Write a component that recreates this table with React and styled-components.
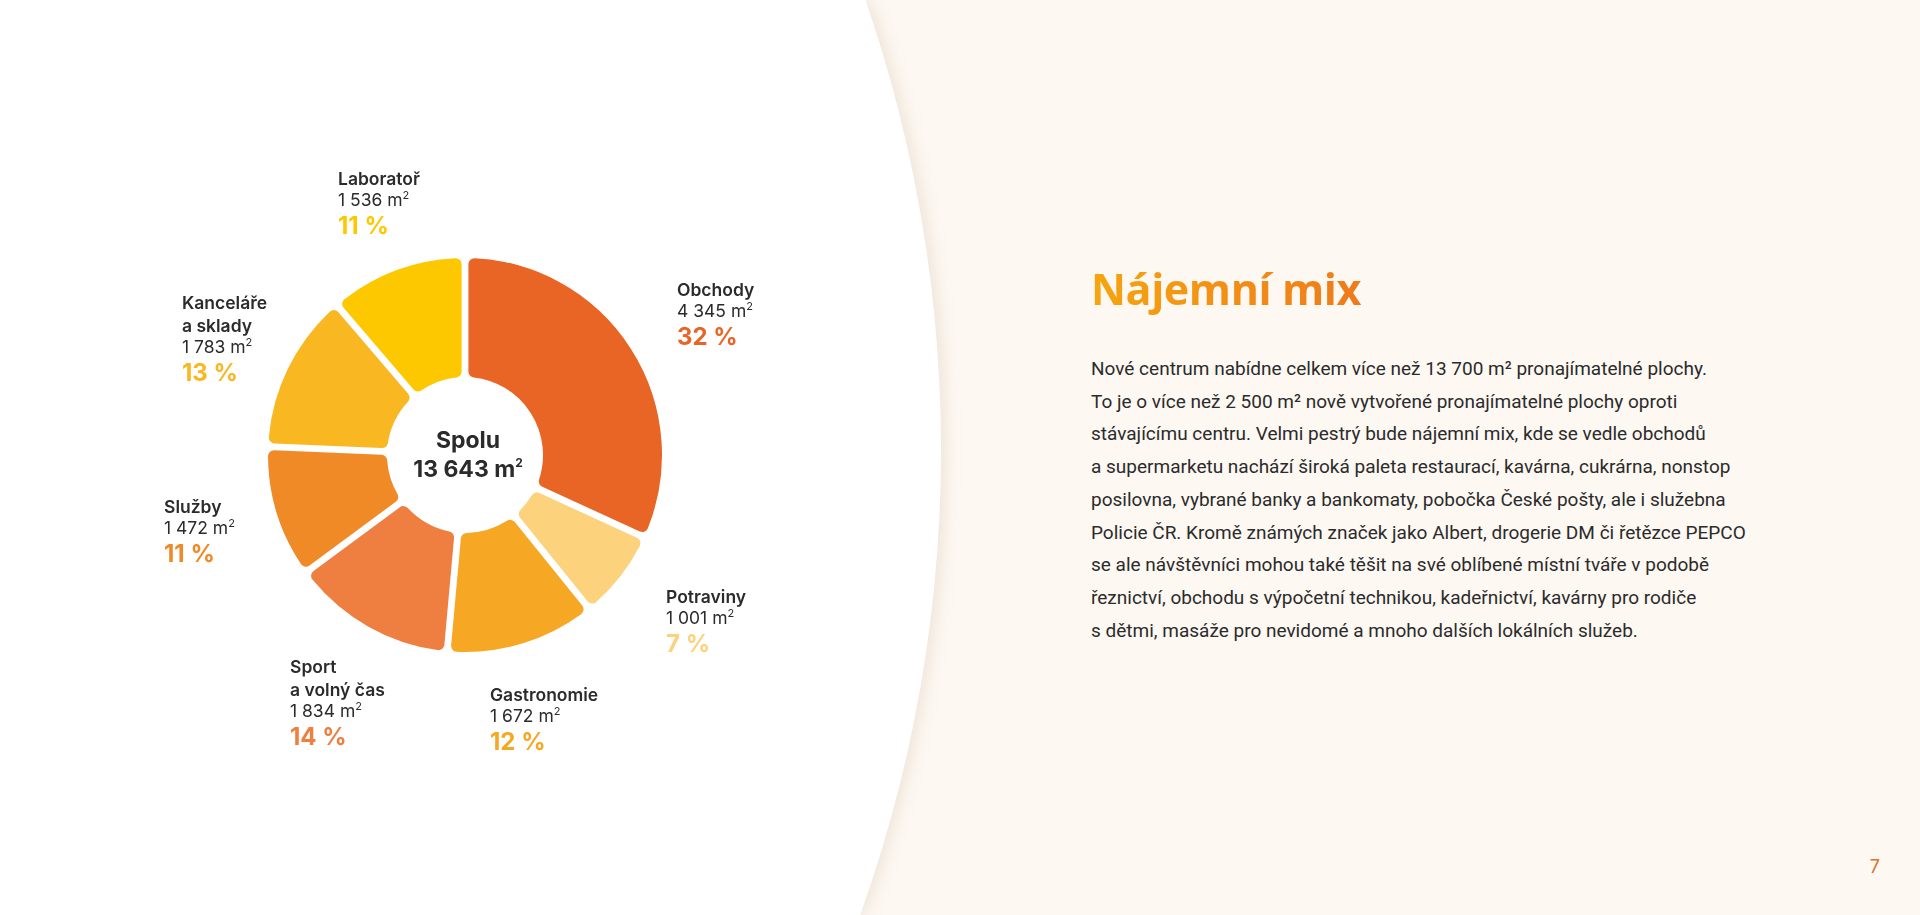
import React from "react";
import styled, { createGlobalStyle } from "styled-components";

const GlobalStyle = createGlobalStyle`
  html, body {
    margin: 0;
    padding: 0;
    background: #fdf8f2;
  }
  body {
    font-family: "Inter", "Noto Sans", sans-serif;
    color: #2b2b2b;
  }
`;

const segments = [
  { name: ["Obchody"], area: "4 345", pct: "32 %", value: 4345, color: "#e96525", pos: { x: 527, y: 138 } },
  { name: ["Potraviny"], area: "1 001", pct: "7 %", value: 1001, color: "#fcd27d", pos: { x: 516, y: 445 } },
  { name: ["Gastronomie"], area: "1 672", pct: "12 %", value: 1672, color: "#f6a723", pos: { x: 340, y: 543 } },
  { name: ["Sport", "a volný čas"], area: "1 834", pct: "14 %", value: 1834, color: "#ee7f40", pos: { x: 140, y: 515 } },
  { name: ["Služby"], area: "1 472", pct: "11 %", value: 1472, color: "#ef8a27", pos: { x: 14, y: 355 } },
  { name: ["Kanceláře", "a sklady"], area: "1 783", pct: "13 %", value: 1783, color: "#f9b722", pos: { x: 32, y: 151 } },
  { name: ["Laboratoř"], area: "1 536", pct: "11 %", value: 1536, color: "#fdc800", pos: { x: 188, y: 27 } },
];

const SIZE = 400;
const C = SIZE / 2;
const OUTER = 197;
const INNER = 78;
const HALF_GAP = 3.4;
const CORNER = 6;

function point(rad, a) {
  return [C + rad * Math.sin(a), C - rad * Math.cos(a)];
}

// annular sector shrunk by the corner radius; the stroke of the same colour
// with round joins grows it back and rounds the corners
function sectorPath(a0, a1) {
  const ro = OUTER - CORNER;
  const ri = INNER + CORNER;
  const d = HALF_GAP + CORNER;
  const o0 = a0 + Math.asin(d / ro);
  const o1 = a1 - Math.asin(d / ro);
  const i0 = a0 + Math.asin(d / ri);
  const i1 = a1 - Math.asin(d / ri);
  const [x1, y1] = point(ro, o0);
  const [x2, y2] = point(ro, o1);
  const [x3, y3] = point(ri, i1);
  const [x4, y4] = point(ri, i0);
  const lo = o1 - o0 > Math.PI ? 1 : 0;
  const li = i1 - i0 > Math.PI ? 1 : 0;
  return `M${x1} ${y1} A${ro} ${ro} 0 ${lo} 1 ${x2} ${y2} L${x3} ${y3} A${ri} ${ri} 0 ${li} 0 ${x4} ${y4} Z`;
}

function Donut() {
  const total = segments.reduce((s, x) => s + x.value, 0);
  let acc = 0;
  return (
    <DonutSvg width={SIZE} height={SIZE} viewBox={`0 0 ${SIZE} ${SIZE}`}>
      {segments.map((s) => {
        const a0 = (acc / total) * Math.PI * 2;
        acc += s.value;
        const a1 = (acc / total) * Math.PI * 2;
        return (
          <path
            key={s.name[0]}
            d={sectorPath(a0, a1)}
            fill={s.color}
            stroke={s.color}
            strokeWidth={CORNER * 2}
            strokeLinejoin="round"
          />
        );
      })}
    </DonutSvg>
  );
}

export default function App() {
  return (
    <>
      <GlobalStyle />
      <Page>
        <ChartSide>
          <ChartPanel>
            <Figure>
              <DonutWrap>
                <Donut />
                <Total>
                  <span>Spolu</span>
                  <span>
                    13 643 m<sup>2</sup>
                  </span>
                </Total>
              </DonutWrap>
              {segments.map((s) => (
                <Label key={s.name[0]} style={{ left: s.pos.x, top: s.pos.y }}>
                  {s.name.map((n) => (
                    <LabelName key={n}>{n}</LabelName>
                  ))}
                  <LabelArea>
                    {s.area} m<sup>2</sup>
                  </LabelArea>
                  <LabelPct $color={s.color}>{s.pct}</LabelPct>
                </Label>
              ))}
            </Figure>
          </ChartPanel>
        </ChartSide>
        <TextSide>
          <Title>Nájemní mix</Title>
          <Body>
            Nové centrum nabídne celkem více než 13 700 m² pronajímatelné plochy.
            <br />
            To je o více než 2 500 m² nově vytvořené pronajímatelné plochy oproti
            <br />
            stávajícímu centru. Velmi pestrý bude nájemní mix, kde se vedle obchodů
            <br />
            a supermarketu nachází široká paleta restaurací, kavárna, cukrárna, nonstop
            <br />
            posilovna, vybrané banky a bankomaty, pobočka České pošty, ale i služebna
            <br />
            Policie ČR. Kromě známých značek jako Albert, drogerie DM či řetězce PEPCO
            <br />
            se ale návštěvníci mohou také těšit na své oblíbené místní tváře v podobě
            <br />
            řeznictví, obchodu s výpočetní technikou, kadeřnictví, kavárny pro rodiče
            <br />
            s dětmi, masáže pro nevidomé a mnoho dalších lokálních služeb.
          </Body>
          <PageNumber>7</PageNumber>
        </TextSide>
      </Page>
    </>
  );
}

const Page = styled.div`
  display: flex;
  width: 1920px;
  height: 915px;
  overflow: hidden;
  background: #fdf8f2;
`;

const ChartSide = styled.div`
  flex: 0 0 941px;
  height: 100%;
  filter: drop-shadow(3px 0 9px rgba(150, 110, 60, 0.16));
`;

const ChartPanel = styled.div`
  height: 100%;
  background: #ffffff;
  clip-path: circle(1378px at -437px 450px);
  padding: 140px 0 0 150px;
  box-sizing: border-box;
`;

const Figure = styled.div`
  position: relative;
  width: 580px;
  height: 620px;
  padding: 115px 0 0 115px;
  box-sizing: border-box;
`;

const DonutWrap = styled.div`
  position: relative;
  width: 400px;
  height: 400px;
`;

const DonutSvg = styled.svg`
  display: block;
`;

const Total = styled.div`
  position: absolute;
  inset: 0;
  display: flex;
  flex-direction: column;
  align-items: center;
  justify-content: center;
  font-size: 23px;
  font-weight: 700;
  line-height: 29px;
  color: #2b2b2b;
  padding-left: 6px;

  sup {
    font-size: 12px;
    line-height: 0;
    vertical-align: 10px;
  }
`;

const Label = styled.div`
  position: absolute;
  display: flex;
  flex-direction: column;
  color: #2b2b2b;
  white-space: nowrap;

  sup {
    font-size: 11px;
    line-height: 0;
    vertical-align: 7px;
  }
`;

const LabelName = styled.div`
  font-size: 17.5px;
  font-weight: 600;
  line-height: 23px;
`;

const LabelArea = styled.div`
  font-size: 17.5px;
  font-weight: 400;
  line-height: 20px;
`;

const LabelPct = styled.div`
  font-size: 24px;
  font-weight: 700;
  line-height: 31px;
  color: ${(p) => p.$color};
`;

const TextSide = styled.div`
  flex: 1;
  display: flex;
  flex-direction: column;
  padding: 262px 40px 37px 150px;
  box-sizing: border-box;
`;

const Title = styled.h1`
  margin: 0;
  font-family: "Open Sans", sans-serif;
  font-size: 43px;
  font-weight: 700;
  line-height: 53px;
  letter-spacing: -0.4px;
  background: linear-gradient(90deg, #f6a50f 0%, #ee7a1c 100%);
  -webkit-background-clip: text;
  background-clip: text;
  color: transparent;
  align-self: flex-start;
`;

const Body = styled.p`
  margin: 38px 0 0;
  font-family: "Roboto", sans-serif;
  font-size: 19px;
  line-height: 32.7px;
  color: #2b2b2b;
  white-space: nowrap;
`;

const PageNumber = styled.div`
  margin-top: auto;
  align-self: flex-end;
  font-family: "Inter", sans-serif;
  font-size: 18px;
  line-height: 23px;
  color: #e0702a;
`;
